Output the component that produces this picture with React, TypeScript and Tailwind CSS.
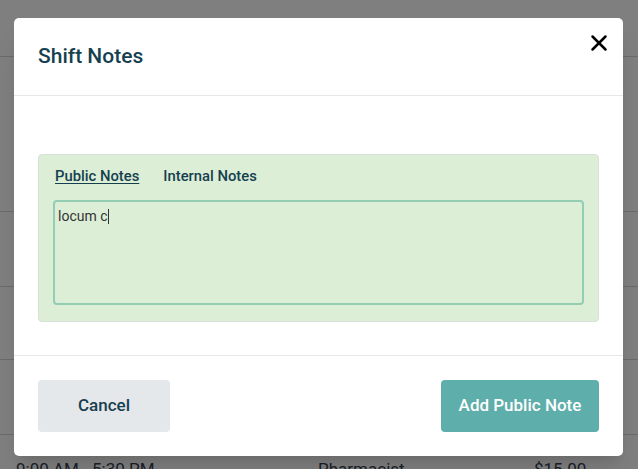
import { X } from 'lucide-react';

const rows = ['h-[57px]', 'h-[155px]', 'h-[75px]', 'h-[73px]', 'h-[75px]'];

export default function App() {
  return (
    <div className="relative w-[638px] h-[469px] overflow-hidden bg-white font-['Roboto',sans-serif]">
      {/* page behind the dialog */}
      <div className="flex flex-col">
        {rows.map((h, i) => (
          <div key={i} className={`${h} border-b border-gray-300`} />
        ))}
        <div className="flex items-center px-4 pt-[24px] text-[17px] text-gray-700 leading-5">
          <span className="w-[302px]">9:00 AM - 5:30 PM</span>
          <span className="w-[216px]">Pharmacist</span>
          <span>$15.00</span>
        </div>
      </div>

      <div className="absolute inset-0 bg-black/50" />

      <div className="absolute left-[14px] top-[18px] w-[609px] h-[438px] bg-white rounded-[5px] shadow-xl flex flex-col">
        <div className="relative h-[78px] flex items-center px-6 border-b border-gray-200">
          <h2 className="text-[21px] font-medium text-[#163f4f] pt-[1px]">Shift Notes</h2>
          <button className="absolute right-[11px] top-[12px] text-black">
            <X className="w-[26px] h-[26px]" strokeWidth={2.3} />
          </button>
        </div>

        <div className="px-6 pt-[58px] pb-[33px] border-b border-gray-200">
          <div className="bg-[#dceed6] border border-[#d8e0dc] rounded-[4px] px-[14px] pt-[11px] pb-[16px]">
            <div className="flex gap-[24px] px-[2px] text-[14.8px] font-medium text-[#163f4f] leading-5">
              <span className="underline underline-offset-2">Public Notes</span>
              <span>Internal Notes</span>
            </div>
            <div className="mt-[14px] h-[105px] border-[2.5px] border-[#93cdb3] rounded-[4px] px-[3px] pt-[4px] text-[14px] text-[#333] leading-5">
              locum c<span className="inline-block w-px h-[15px] bg-[#333] align-middle -mt-[2px]" />
            </div>
          </div>
        </div>

        <div className="flex-1 flex items-center justify-between px-6">
          <button className="w-[132px] h-[52px] rounded-[4px] bg-[#e5e8eb] text-[17px] font-medium text-[#163f4f]">
            Cancel
          </button>
          <button className="w-[158px] h-[52px] rounded-[4px] bg-[#5eaeab] text-[17px] font-medium text-white">
            Add Public Note
          </button>
        </div>
      </div>
    </div>
  );
}
